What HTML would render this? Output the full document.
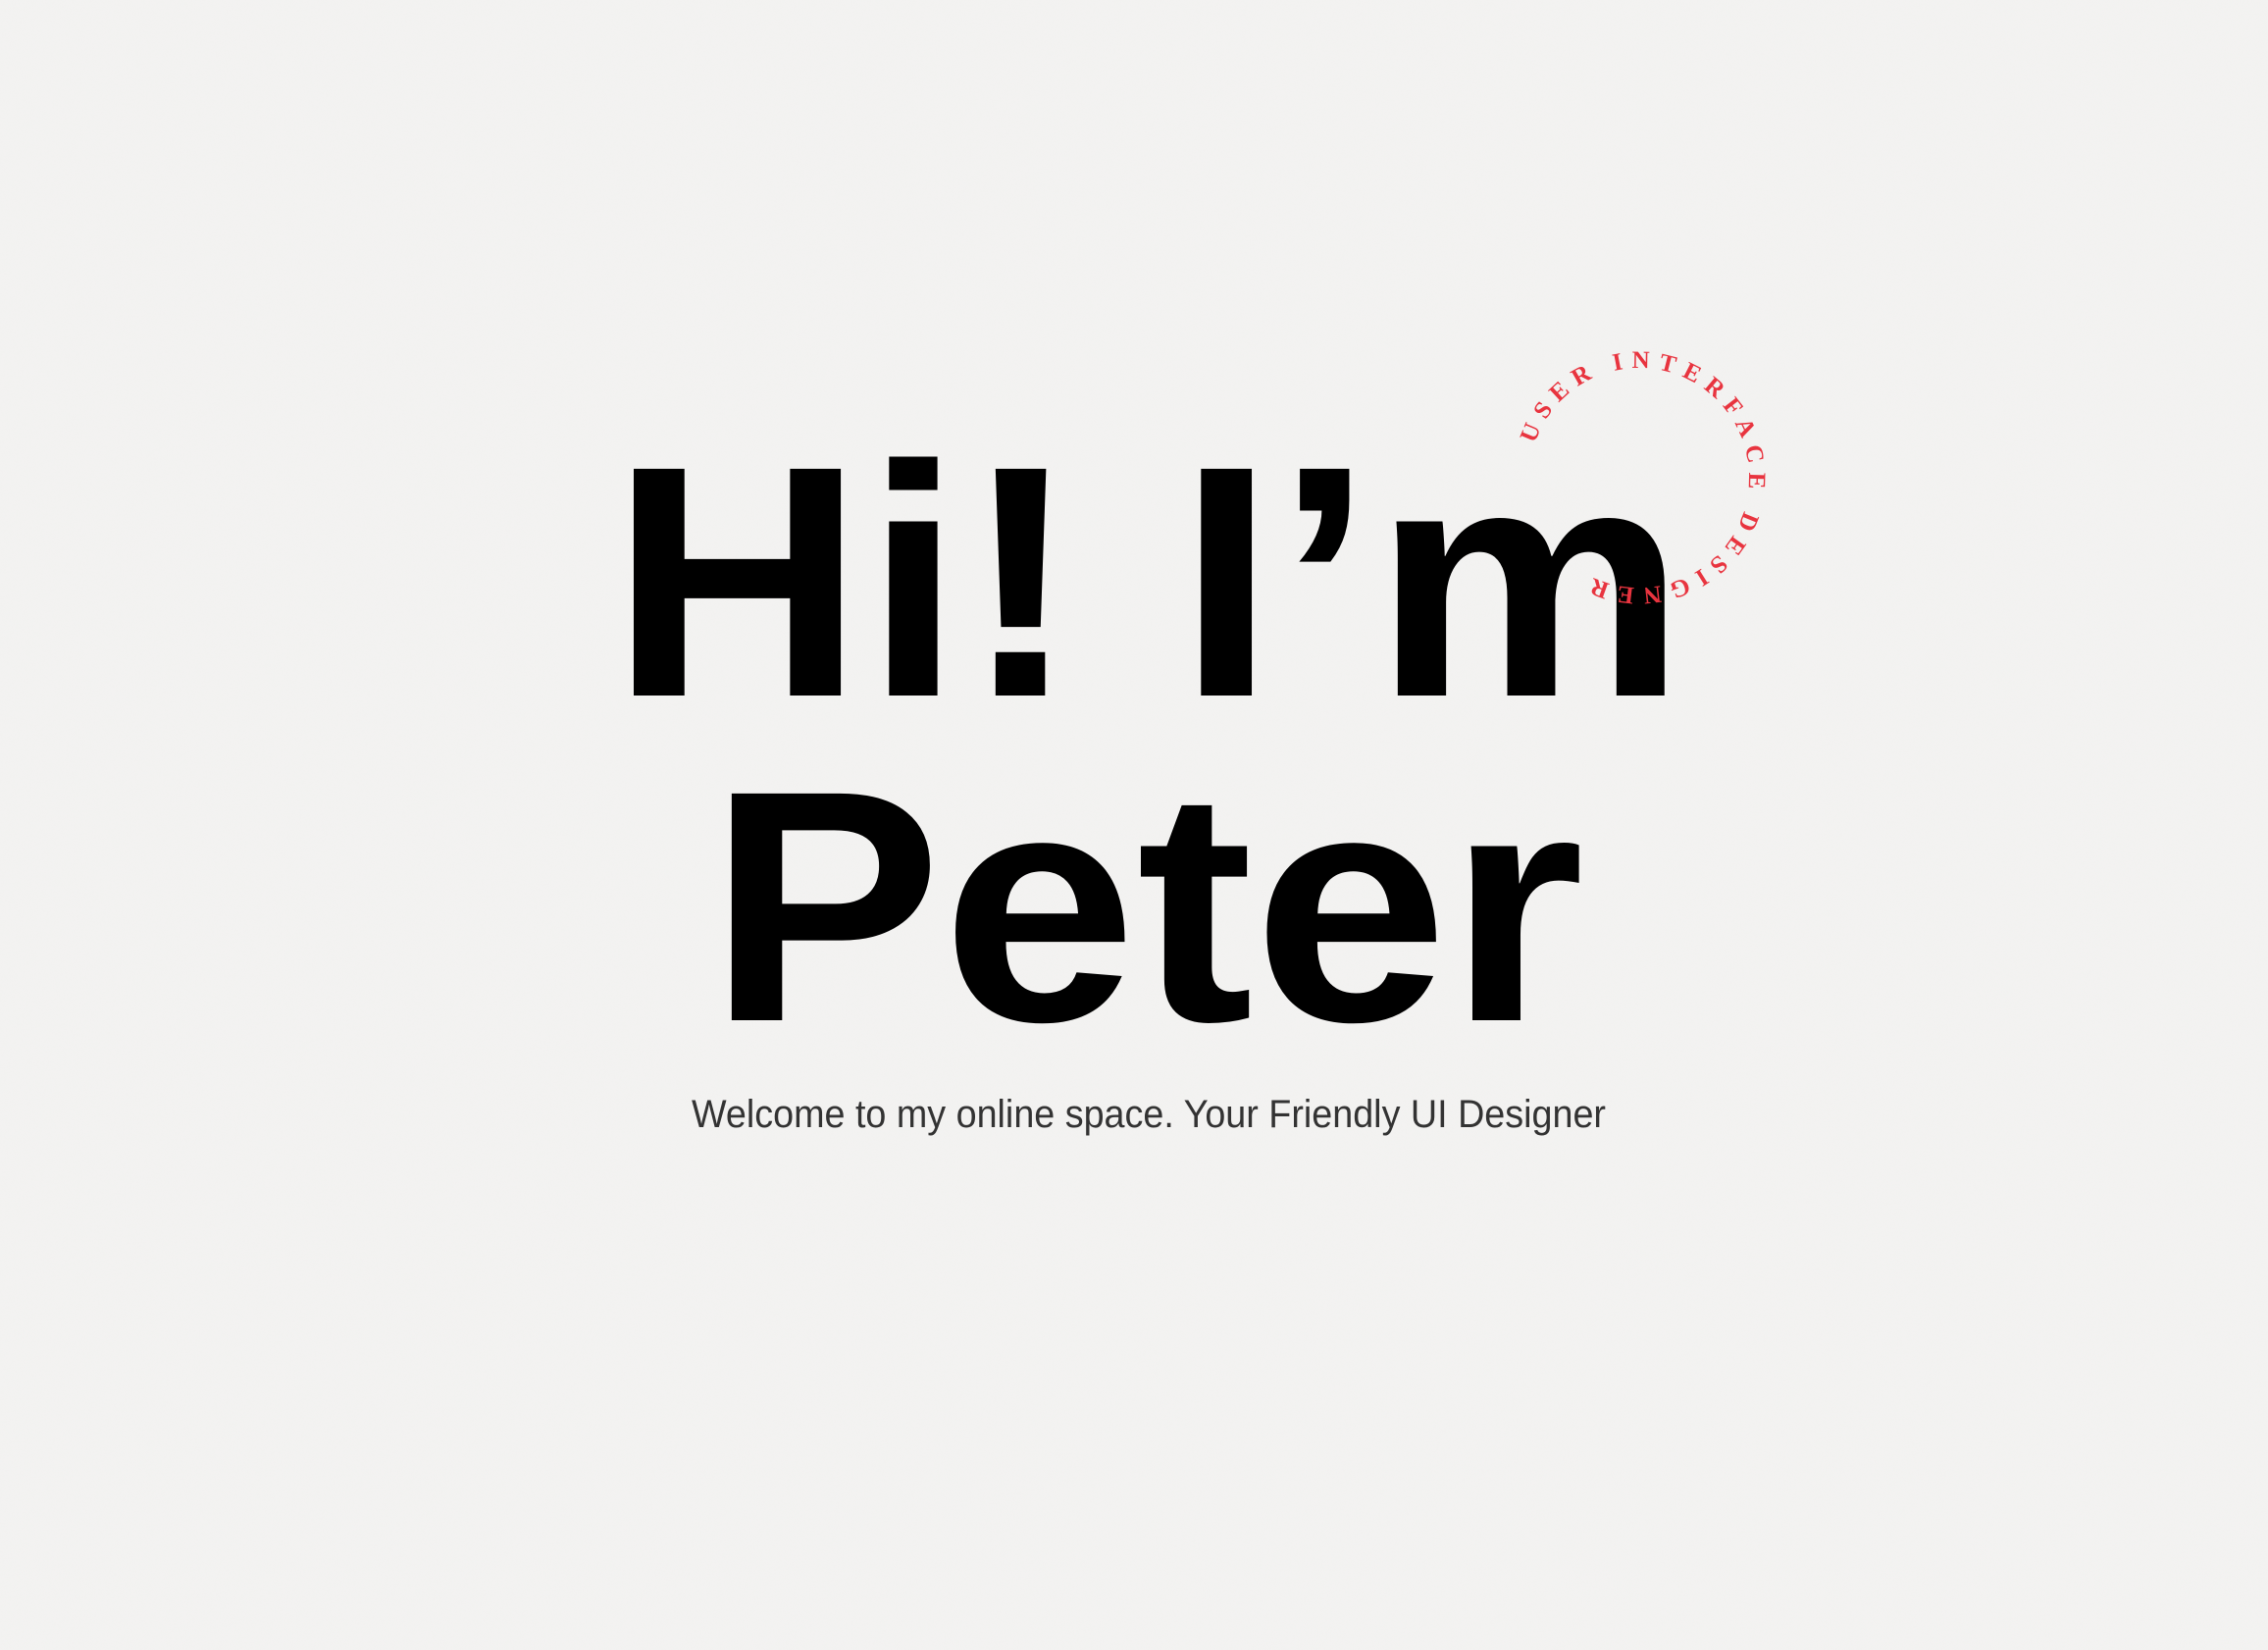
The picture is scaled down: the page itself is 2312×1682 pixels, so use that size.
<!DOCTYPE html>
<html><head><meta charset="utf-8"><style>
html,body{margin:0;padding:0;background:#f2f1f0;}
svg{display:block}
</style></head><body>
<svg width="2312" height="1682" viewBox="0 0 2312 1682" xmlns="http://www.w3.org/2000/svg">
<defs>
<filter id="n" x="0" y="0" width="100%" height="100%">
<feTurbulence type="fractalNoise" baseFrequency="0.9" numOctaves="1" seed="3" result="t"/>
<feColorMatrix type="matrix" values="0 0 0 0 0.85  0 0 0 0 0.85  0 0 0 0 0.85  0 0 0 0.25 0"/>
</filter>
<path id="c" d="M1671,375 A112,112 0 1 1 1671,599 A112,112 0 1 1 1671,375"/>
</defs>
<rect width="2312" height="1682" fill="#f3f2f1"/>
<rect width="2312" height="1682" filter="url(#n)" opacity="0.6"/>
<text x="622" y="709" font-family="Liberation Sans, sans-serif" font-weight="bold" font-size="336" fill="#000" textLength="1097" lengthAdjust="spacingAndGlyphs">Hi! I’m</text>
<text x="722" y="1040" font-family="Liberation Sans, sans-serif" font-weight="bold" font-size="336" fill="#000" textLength="893" lengthAdjust="spacingAndGlyphs">Peter</text>
<text x="705" y="1149" font-family="Liberation Sans, sans-serif" font-size="40" fill="#333" textLength="932" lengthAdjust="spacingAndGlyphs">Welcome to my online space. Your Friendly UI Designer</text>
<g transform="rotate(288 1671 487)">
<text font-family="Liberation Serif, serif" font-weight="bold" font-size="25" fill="#e8343f">
<textPath href="#c" textLength="540" lengthAdjust="spacing">USER INTERFACE DESIGNER</textPath>
</text>
</g>
</svg>
</body></html>
